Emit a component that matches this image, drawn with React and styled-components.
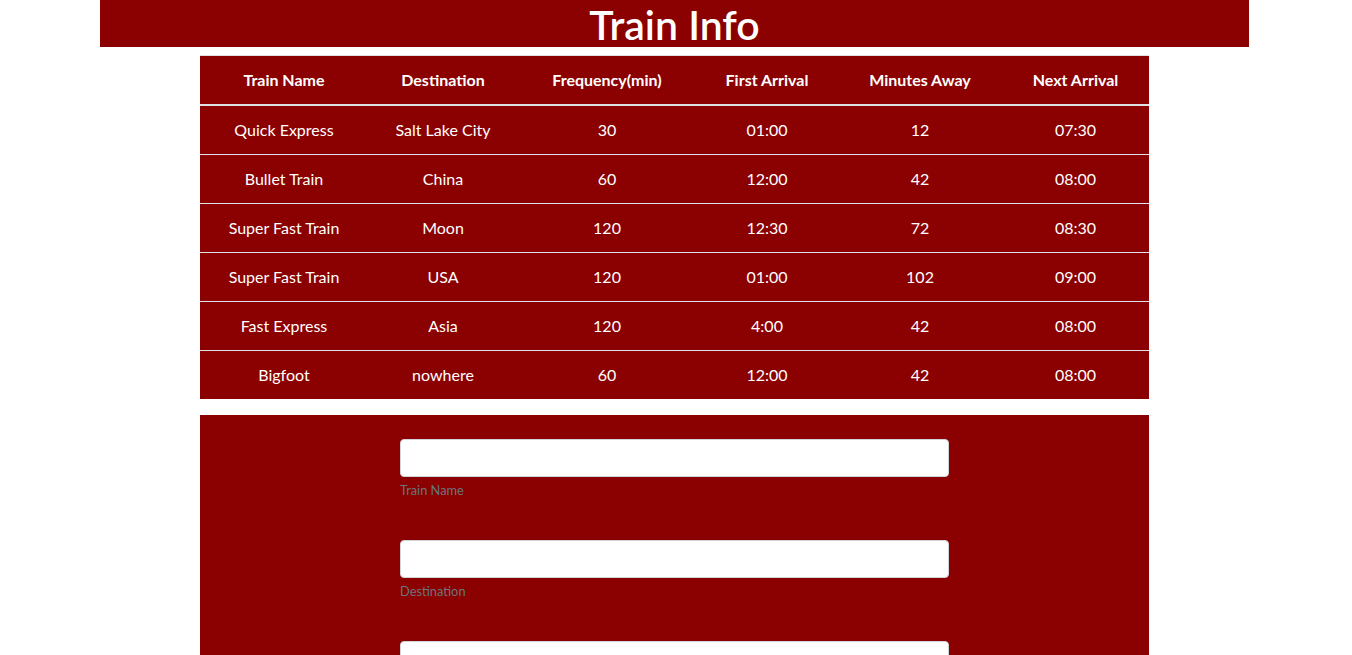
import React from "react";
import styled, { createGlobalStyle } from "styled-components";

const Global = createGlobalStyle`
  body {
    margin: 0 3px 0 0;
    font-family: "Lato", "Segoe UI", sans-serif;
    font-size: 16px;
    line-height: 1.5;
    color: #212529;
    background: #fff;
  }
  * { box-sizing: border-box; }
`;

const Header = styled.header`
  margin: 0 100px;
  height: 47px;
  background: #8b0000;
  display: flex;
  align-items: center;
  justify-content: center;
`;

const Title = styled.h1`
  margin: 0;
  font-size: 41px;
  font-weight: 600;
  line-height: 45px;
  color: #fff;
  padding-top: 2px;
`;

const Table = styled.table`
  margin: 8px 200px 16px;
  width: calc(100% - 400px);
  border-collapse: collapse;
  table-layout: fixed;
  background: #8b0000;
  color: #fff;
`;

const Th = styled.th`
  padding: 12px;
  font-weight: 700;
  text-align: center;
  border-top: 1px solid #dee2e6;
  border-bottom: 2px solid #dee2e6;
  line-height: 24px;
`;

const Td = styled.td`
  padding: 12px;
  text-align: center;
  border-top: 1px solid #dee2e6;
  line-height: 24px;
`;

const FormPanel = styled.form`
  margin: 0 200px;
  background: #8b0000;
  padding: 24px 200px 24px;
`;

const Group = styled.div`
  margin-bottom: 40px;
`;

const Input = styled.input`
  display: block;
  width: 100%;
  height: 38px;
  padding: 6px 12px;
  font-size: 16px;
  border: 1px solid #ced4da;
  border-radius: 4px;
  background: #fff;
  font-family: inherit;
`;

const Help = styled.small`
  display: block;
  margin-top: 4px;
  font-size: 12.8px;
  line-height: 19.2px;
  color: #6c757d;
`;

const Button = styled.button`
  height: 38px;
  padding: 6px 12px;
  font-size: 16px;
  font-family: inherit;
  color: #fff;
  background: #007bff;
  border: 1px solid #007bff;
  border-radius: 4px;
`;

const widths = [168, 150, 178, 142, 164, 147];
const heads = ["Train Name", "Destination", "Frequency(min)", "First Arrival", "Minutes Away", "Next Arrival"];
const rows = [
  ["Quick Express", "Salt Lake City", "30", "01:00", "12", "07:30"],
  ["Bullet Train", "China", "60", "12:00", "42", "08:00"],
  ["Super Fast Train", "Moon", "120", "12:30", "72", "08:30"],
  ["Super Fast Train", "USA", "120", "01:00", "102", "09:00"],
  ["Fast Express", "Asia", "120", "4:00", "42", "08:00"],
  ["Bigfoot", "nowhere", "60", "12:00", "42", "08:00"],
];
const fields = ["Train Name", "Destination", "First Train Time (HH:mm - military time)", "Frequency (min)"];

export default function App() {
  return (
    <>
      <Global />
      <Header>
        <Title>Train Info</Title>
      </Header>
      <Table>
        <colgroup>
          {widths.map((w, i) => (
            <col key={i} style={{ width: w }} />
          ))}
        </colgroup>
        <thead>
          <tr>
            {heads.map((h) => (
              <Th key={h}>{h}</Th>
            ))}
          </tr>
        </thead>
        <tbody>
          {rows.map((r, i) => (
            <tr key={i}>
              {r.map((c, j) => (
                <Td key={j}>{c}</Td>
              ))}
            </tr>
          ))}
        </tbody>
      </Table>
      <FormPanel onSubmit={(e) => e.preventDefault()}>
        {fields.map((f) => (
          <Group key={f}>
            <Input type="text" />
            <Help>{f}</Help>
          </Group>
        ))}
        <Button type="submit">Submit</Button>
      </FormPanel>
    </>
  );
}
